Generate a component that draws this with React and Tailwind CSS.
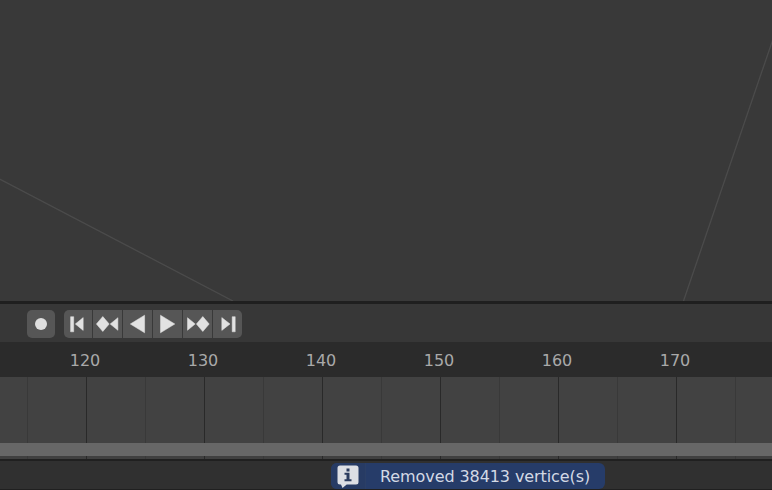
const transport = [
  { name: "Jump to start", width: "w-[28px]", w: 28, shapes: ["M6.6 6.7h3.1v15.1H6.6z", "M11.3 14 19.2 7.6v12.8z"] },
  { name: "Previous keyframe", width: "w-[29px]", w: 29, shapes: ["M3.4 14 9.8 6.5 16.2 14 9.800 21.500z", "M17.200 14 24.900 7.700v12.600z"] },
  { name: "Play backwards", width: "w-[29px]", w: 29, shapes: ["M7.300 14 21.600 5.200v17.600z"] },
  { name: "Play", width: "w-[29px]", w: 29, shapes: ["M7.500 5.200 21.800 14 7.500 22.800z"] },
  { name: "Next keyframe", width: "w-[29px]", w: 29, shapes: ["M4.500 7.700 12.200 14 4.500 20.300z", "M13.400 14 19.800 6.500 26.200 14 19.800 21.500z"] },
  { name: "Jump to end", width: "w-[29px]", w: 29, shapes: ["M8.800 7.600 17 14 8.800 20.400z", "M19.200 6.700h3v15.100h-3z"] },
];

const frames = [120, 130, 140, 150, 160, 170];
const ticks = Array.from({ length: 13 }, (_, i) => i);

function Ticks() {
  return (
    <div className="ml-[27px] flex h-full">
      {ticks.map((i) => (
        <div
          key={i}
          className={`w-[59px] shrink-0 border-l ${i % 2 ? "border-[#292929]" : "border-[#393939]"}`}
        />
      ))}
    </div>
  );
}

function Viewport() {
  return (
    <svg className="block h-[301px] w-full bg-[#393939]" viewBox="0 0 772 301" fill="none" stroke="#4b4b4b" strokeWidth="1.3">
      <path d="M-2 178.2 233 301" />
      <path d="M773 39 683.5 301" />
    </svg>
  );
}

function Toolbar() {
  return (
    <div className="flex h-[38px] items-start gap-[9px] bg-[#373737] pt-[6px] pl-[27px]">
      <button aria-label="Auto keying" className="flex h-7 w-7 items-center justify-center rounded-[5px] bg-[#565656]">
        <span className="h-3 w-3 rounded-full bg-[#dedede]" />
      </button>
      <div className="flex h-7 gap-px overflow-hidden rounded-[5px] bg-[#393939]">
        {transport.map((b) => (
          <button key={b.name} aria-label={b.name} className={`h-7 bg-[#565656] ${b.width}`}>
            <svg className="block h-7 w-full" viewBox={`0 0 ${b.w} 28`} fill="#e2e2e2" stroke="#e2e2e2" strokeWidth="0.5" strokeLinejoin="round">
              {b.shapes.map((d) => (
                <path key={d} d={d} />
              ))}
            </svg>
          </button>
        ))}
      </div>
    </div>
  );
}

export default function App() {
  return (
    <div className="flex h-[490px] w-[772px] flex-col overflow-hidden bg-[#303030] font-['DejaVu_Sans',sans-serif] text-[16px]">
      <Viewport />
      <div className="h-[3px] bg-[#1f1f1f]" />
      <Toolbar />
      <div className="flex h-[35px] items-center overflow-hidden bg-[#2b2b2b] pt-[2px] pl-[26px] tracking-[-0.08px] text-[#a9a9a9]">
        {frames.map((f) => (
          <div key={f} className="w-[118px] shrink-0 text-center">{f}</div>
        ))}
      </div>
      <div className="h-[66px] overflow-hidden bg-[#424242]">
        <Ticks />
      </div>
      <div className="h-[13px] bg-[#676767]" />
      <div className="h-[3px] overflow-hidden bg-[#404040]">
        <Ticks />
      </div>
      <div className="h-[2px] bg-[#202020]" />
      <div className="flex h-[28px] bg-[#303030] pt-[2px] pl-[331px]">
        <div className="flex h-[26px] w-[274px] overflow-hidden rounded-[6px] bg-[#263c69] text-[#d3d9e5]">
          <div className="w-[35px] border-r border-[#2b3f66] bg-[#273b64]">
            <svg className="block h-[26px] w-[34px]" viewBox="0 0 34 26">
              <path
                d="M9 2.500h16a2.500 2.500 0 0 1 2.500 2.500v14a2.500 2.500 0 0 1-2.500 2.500h-9.300L11.500 25 10 21.500H9a2.500 2.500 0 0 1-2.500-2.500v-14a2.500 2.500 0 0 1 2.500-2.500z"
                fill="#dddfe4"
              />
              <path d="M15.500 5.500h3v3h-3zM13.500 9.800h5v6.500h2v2h-7v-2h2v-4.500h-2z" fill="#2c3c5e" />
            </svg>
          </div>
          <div className="pl-[14px] leading-[28px] tracking-[-0.09px] whitespace-nowrap">Removed 38413 vertice(s)</div>
        </div>
      </div>
      <div className="h-px bg-[#202020]" />
    </div>
  );
}
